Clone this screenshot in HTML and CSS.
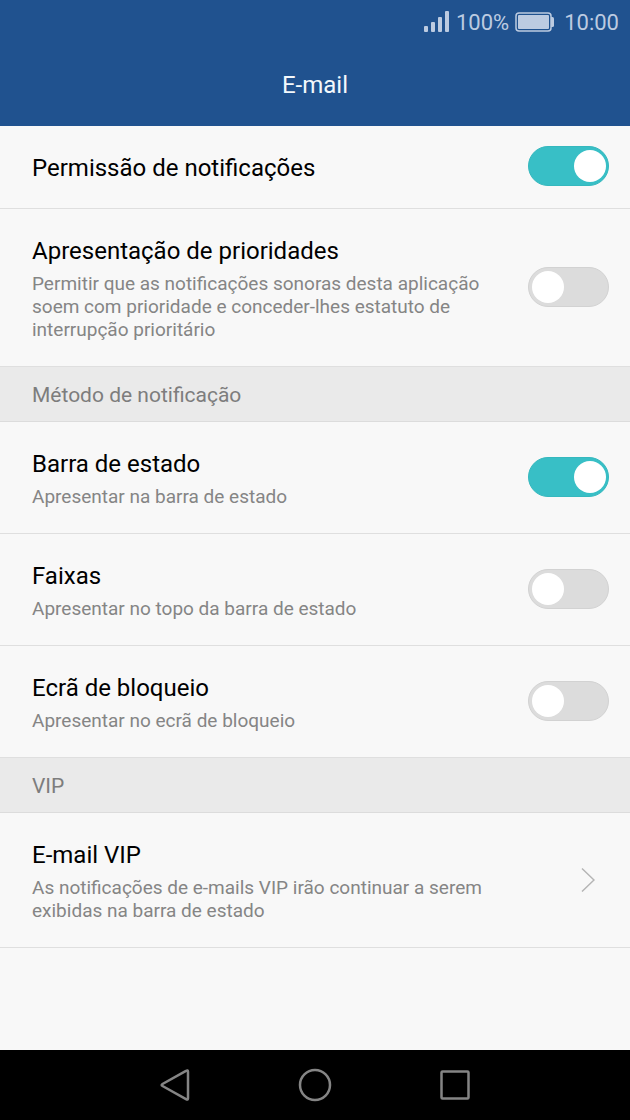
FILE: index.html
```html
<!DOCTYPE html>
<html lang="pt">
<head>
<meta charset="utf-8">
<meta name="viewport" content="width=device-width, initial-scale=1">
<title>E-mail</title>
<link rel="stylesheet" href="styles.css">
</head>
<body>
<div class="screen">
  <header class="header">
    <div class="status">
      <svg class="signal" width="26" height="22" viewBox="0 0 26 22" aria-hidden="true">
        <rect x="0" y="15" width="4" height="6" rx="1"/>
        <rect x="7" y="11" width="4" height="10" rx="1"/>
        <rect x="14" y="6" width="4" height="15" rx="1"/>
        <rect x="21" y="0" width="4" height="21" rx="1"/>
      </svg>
      <span>100%</span>
      <svg class="battery" width="39" height="20" viewBox="0 0 39 20" aria-hidden="true">
        <rect class="battery-case" x="1" y="1" width="35" height="18" rx="3"/>
        <rect x="3" y="3" width="31" height="14" rx="1"/>
        <path d="M36 5h1.500q1.500 0 1.500 1.500v7q0 1.500-1.500 1.500H36z"/>
      </svg>
      <span>10:00</span>
    </div>
    <h1 class="title">E-mail</h1>
  </header>

  <main class="content">
    <label class="row">
      <span class="text"><span class="name">Permissão de notificações</span></span>
      <input class="switch" type="checkbox" role="switch" checked>
    </label>
    <label class="row">
      <span class="text">
        <span class="name">Apresentação de prioridades</span>
        <span class="desc">Permitir que as notificações sonoras desta aplicação soem com prioridade e conceder-lhes estatuto de interrupção prioritário</span>
      </span>
      <input class="switch" type="checkbox" role="switch">
    </label>

    <h2 class="section">Método de notificação</h2>
    <label class="row">
      <span class="text">
        <span class="name">Barra de estado</span>
        <span class="desc">Apresentar na barra de estado</span>
      </span>
      <input class="switch" type="checkbox" role="switch" checked>
    </label>
    <label class="row">
      <span class="text">
        <span class="name">Faixas</span>
        <span class="desc">Apresentar no topo da barra de estado</span>
      </span>
      <input class="switch" type="checkbox" role="switch">
    </label>
    <label class="row">
      <span class="text">
        <span class="name">Ecrã de bloqueio</span>
        <span class="desc">Apresentar no ecrã de bloqueio</span>
      </span>
      <input class="switch" type="checkbox" role="switch">
    </label>

    <h2 class="section">VIP</h2>
    <a class="row" href="#vip">
      <span class="text">
        <span class="name">E-mail VIP</span>
        <span class="desc">As notificações de e-mails VIP irão continuar a serem exibidas na barra de estado</span>
      </span>
      <svg class="chevron" width="14" height="26" viewBox="0 0 14 26" aria-hidden="true"><path d="M1 2.500l12 11.500L1 25.500"/></svg>
    </a>
  </main>

  <nav class="navbar">
    <button class="nav-button" type="button" aria-label="Voltar">
      <svg width="34" height="34" viewBox="0 0 34 34" aria-hidden="true"><path d="M28 2.800Q30 1.600 30 3.800v26.400Q30 32.400 28 31.200L4.500 18Q2.800 17 4.500 16z"/></svg>
    </button>
    <button class="nav-button" type="button" aria-label="Início">
      <svg width="34" height="34" viewBox="0 0 34 34" aria-hidden="true"><circle cx="17" cy="17" r="15"/></svg>
    </button>
    <button class="nav-button" type="button" aria-label="Recentes">
      <svg width="34" height="34" viewBox="0 0 34 34" aria-hidden="true"><rect x="3.500" y="3.500" width="27" height="27" rx="1"/></svg>
    </button>
  </nav>
</div>
</body>
</html>
```

FILE: styles.css
```css
* {
  box-sizing: border-box;
}

body {
  margin: 0;
  background: #f8f8f8;
  color: #000;
  font-family: Roboto, "Noto Sans", sans-serif;
}

.screen {
  display: flex;
  flex-direction: column;
  min-height: 100vh;
}

.header {
  background: #20528f;
  padding-bottom: 26px;
}

.status {
  display: flex;
  align-items: center;
  justify-content: flex-end;
  gap: 6px;
  height: 44px;
  padding-right: 11px;
  color: #bccbe1;
  font-size: 22px;
}

.signal,
.battery {
  fill: #bccbe1;
}

.battery {
  margin-right: 4px;
}

.battery-case {
  fill: none;
  stroke: #bccbe1;
  stroke-width: 1.5;
}

.title {
  margin: 0;
  padding-top: 26px;
  color: #f3f8fc;
  font-size: 24px;
  font-weight: 400;
  line-height: 30px;
  text-align: center;
}

.content {
  flex: 1;
}

.row {
  display: grid;
  grid-template-columns: 1fr 81px;
  column-gap: 24px;
  align-items: center;
  padding: 20px 21px 22px 32px;
  border-bottom: 1px solid #dfdfdf;
  color: inherit;
  text-decoration: none;
}

.text {
  display: flex;
  flex-direction: column;
  gap: 6px;
  padding: 7px 0 3px;
}

.name {
  font-size: 24px;
  line-height: 30px;
}

.desc {
  color: #858585;
  font-size: 19px;
  line-height: 23px;
}

.section {
  margin: 0;
  padding: 14px 32px 12px;
  border-bottom: 1px solid #dcdcdc;
  background: #eaeaea;
  color: #7d7d7d;
  font-size: 21px;
  font-weight: 400;
  line-height: 28px;
}

.switch {
  appearance: none;
  display: flex;
  align-items: center;
  width: 81px;
  height: 40px;
  margin: 0;
  padding: 0 3px;
  border: 1px solid #d2d2d2;
  border-radius: 20px;
  background: #dcdcdc;
}

.switch::before {
  content: "";
  width: 32px;
  height: 32px;
  border-radius: 50%;
  background: #fff;
}

.switch:checked {
  justify-content: flex-end;
  padding: 0 2px;
  border-color: #35b8be;
  background: #38bfc6;
}

.chevron {
  justify-self: end;
  margin-right: 14px;
  fill: none;
  stroke: #b5b5b5;
  stroke-width: 1.5;
}

.navbar {
  display: flex;
  justify-content: center;
  gap: 40px;
  height: 70px;
  background: #000;
}

.nav-button {
  display: flex;
  align-items: center;
  justify-content: center;
  width: 100px;
  padding: 0;
  border: 0;
  background: none;
}

.nav-button svg {
  fill: none;
  stroke: #858585;
  stroke-width: 2.5;
}
```
